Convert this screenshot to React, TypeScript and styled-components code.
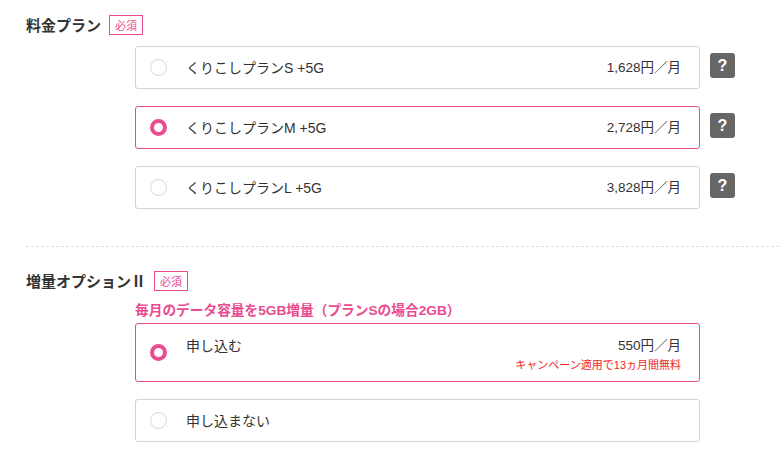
import React from "react";
import styled, { createGlobalStyle } from "styled-components";

const Global = createGlobalStyle`
  html, body { margin: 0; padding: 0; background: #fff; }
  body {
    font-family: "Liberation Sans", "Noto Sans CJK JP", sans-serif;
    color: #333;
  }
`;

const PINK = "#ea4c91";

const Page = styled.div`
  padding: 15px 0 0 26px;
  width: 753px;
`;

const Section = styled.section<{ $bottom?: number }>`
  padding-bottom: ${(p) => p.$bottom ?? 0}px;
`;

const HeaderRow = styled.div<{ $top?: number }>`
  display: flex;
  align-items: center;
  gap: 8px;
  height: 20px;
  margin-top: ${(p) => p.$top ?? 0}px;
`;

const Title = styled.h2`
  margin: 0;
  font-family: "Noto Sans CJK JP", "Liberation Sans", sans-serif;
  font-size: 15px;
  font-weight: 700;
  line-height: 20px;
  color: #333;
`;

const Badge = styled.span`
  display: inline-flex;
  align-items: center;
  justify-content: center;
  box-sizing: border-box;
  width: 34px;
  height: 20px;
  border: 1px solid ${PINK};
  color: ${PINK};
  font-family: "Noto Sans CJK JP", sans-serif;
  font-size: 11px;
  line-height: 1;
`;

const Body = styled.div<{ $top: number }>`
  margin-left: 109px;
  margin-top: ${(p) => p.$top}px;
  display: flex;
  flex-direction: column;
  gap: 17px;
`;

const Note = styled.div`
  color: ${PINK};
  font-size: 13.7px;
  font-weight: 700;
  line-height: 16px;
  margin-bottom: -13px;
`;

const Row = styled.div`
  display: flex;
  align-items: flex-start;
  gap: 10px;
`;

const Card = styled.label<{ $selected?: boolean; $tall?: boolean }>`
  box-sizing: border-box;
  width: 565px;
  height: ${(p) => (p.$tall ? 59 : 43)}px;
  border: 1px solid ${(p) => (p.$selected ? PINK : "#d3d3d3")};
  border-radius: 3px;
  display: flex;
  align-items: center;
  padding: 0 18px 0 14px;
  background: #fff;
  cursor: pointer;
`;

const Radio = styled.span<{ $selected?: boolean }>`
  flex: none;
  box-sizing: border-box;
  width: 17px;
  height: 17px;
  border-radius: 50%;
  border: ${(p) => (p.$selected ? `4px solid ${PINK}` : "1px solid #d6d6d6")};
  background: #fff;
`;

const Content = styled.div<{ $top?: boolean }>`
  flex: 1;
  margin-left: 19px;
  display: flex;
  justify-content: space-between;
  align-self: ${(p) => (p.$top ? "flex-start" : "center")};
  padding-top: ${(p) => (p.$top ? 13 : 0)}px;
`;

const Label = styled.span`
  font-size: 14px;
  line-height: 18px;
  color: #333;
`;

const PriceCol = styled.div`
  display: flex;
  flex-direction: column;
  align-items: flex-end;
`;

const Price = styled.span`
  font-size: 13.5px;
  line-height: 18px;
  color: #333;
`;

const Campaign = styled.span`
  font-size: 11px;
  line-height: 14px;
  margin-top: 3px;
  color: #f2261f;
`;

const Help = styled.button`
  margin-top: 7px;
  width: 25px;
  height: 25px;
  border: none;
  border-radius: 3px;
  background: #666;
  color: #fff;
  font-family: "Liberation Sans", sans-serif;
  font-weight: 700;
  font-size: 16px;
  line-height: 25px;
  padding: 0;
  display: flex;
  align-items: center;
  justify-content: center;
`;

const Divider = styled.hr`
  margin: 0;
  border: none;
  border-top: 1px dashed #e2e2e2;
`;

const plans = [
  { name: "くりこしプランS +5G", price: "1,628円／月", selected: false },
  { name: "くりこしプランM +5G", price: "2,728円／月", selected: true },
  { name: "くりこしプランL +5G", price: "3,828円／月", selected: false },
];

export default function App() {
  return (
    <>
      <Global />
      <Page>
        <Section $bottom={37}>
          <HeaderRow>
            <Title>料金プラン</Title>
            <Badge>必須</Badge>
          </HeaderRow>
          <Body $top={11}>
            {plans.map((p) => (
              <Row key={p.name}>
                <Card $selected={p.selected}>
                  <Radio $selected={p.selected} />
                  <Content>
                    <Label>{p.name}</Label>
                    <Price>{p.price}</Price>
                  </Content>
                </Card>
                <Help>?</Help>
              </Row>
            ))}
          </Body>
        </Section>
        <Divider />
        <Section>
          <HeaderRow $top={24}>
            <Title>増量オプションⅡ</Title>
            <Badge>必須</Badge>
          </HeaderRow>
          <Body $top={12}>
            <Note>毎月のデータ容量を5GB増量（プランSの場合2GB）</Note>
            <Card $selected $tall>
              <Radio $selected />
              <Content $top>
                <Label>申し込む</Label>
                <PriceCol>
                  <Price>550円／月</Price>
                  <Campaign>キャンペーン適用で13ヵ月間無料</Campaign>
                </PriceCol>
              </Content>
            </Card>
            <Card>
              <Radio />
              <Content>
                <Label>申し込まない</Label>
              </Content>
            </Card>
          </Body>
        </Section>
      </Page>
    </>
  );
}
